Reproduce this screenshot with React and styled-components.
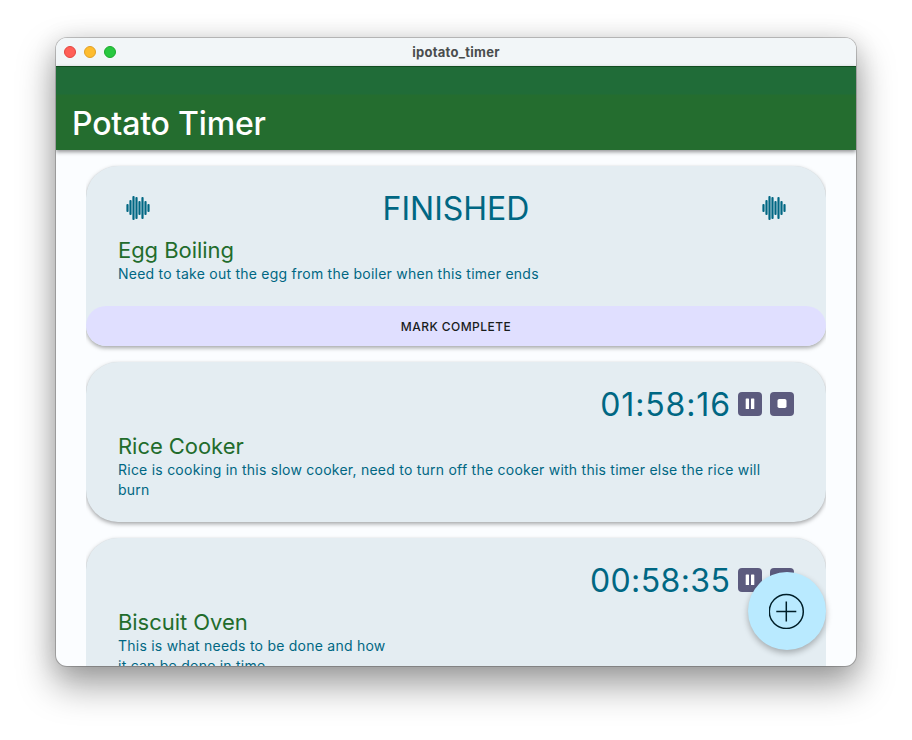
import React from "react";
import styled, { createGlobalStyle } from "styled-components";

const GlobalStyle = createGlobalStyle`
  * { box-sizing: border-box; }
  body { margin: 0; background: #fff; font-family: Inter, "Liberation Sans", sans-serif; overflow: hidden; }
`;

const Desktop = styled.div`
  height: 740px;
  padding: 38px 56px 0;
`;

const Window = styled.main`
  position: relative;
  width: 800px;
  height: 628px;
  border-radius: 11px;
  background: #fbfdff;
  box-shadow: 0 0 0 1px rgba(0, 0, 0, 0.2), 0 18px 36px 2px rgba(0, 0, 0, 0.36), 0 2px 24px rgba(0, 0, 0, 0.12);
`;

const Clip = styled.div`
  height: 100%;
  display: flex;
  flex-direction: column;
  border-radius: 11px;
  overflow: hidden;
`;

const TitleBar = styled.div`
  flex: none;
  height: 28px;
  display: grid;
  grid-template-columns: 1fr auto 1fr;
  align-items: center;
  padding: 0 8px;
  background: #f2f6f8;
`;

const Lights = styled.div`
  display: flex;
  gap: 8px;
`;

const Light = styled.span`
  width: 12px;
  height: 12px;
  border-radius: 50%;
  background: ${(p) => p.$fill};
  border: 1px solid ${(p) => p.$edge};
`;

const WindowTitle = styled.div`
  font-size: 13px;
  line-height: 16px;
  font-weight: 700;
  letter-spacing: 0.28px;
  margin-bottom: 1px;
  color: #4a4d4d;
`;

const Header = styled.header`
  flex: none;
  height: 84px;
  z-index: 1;
  display: flex;
  align-items: flex-end;
  padding: 0 16px 6px;
  border-top: 1px solid #114c20;
  background: linear-gradient(#206c38 0 27px, #246d2f 28px);
  box-shadow: 0 2px 4px rgba(0, 0, 0, 0.42);
`;

const AppTitle = styled.h1`
  margin: 0;
  font-size: 32px;
  line-height: 40px;
  font-weight: 500;
  letter-spacing: -0.18px;
  color: #fff;
`;

const List = styled.section`
  flex: 1;
  min-height: 0;
  display: flex;
  flex-direction: column;
  gap: 16px;
  margin: 0 30px;
  padding-top: 16px;
  overflow: hidden;
`;

const Card = styled.article`
  flex: none;
  height: ${(p) => p.$height}px;
  display: flex;
  flex-direction: column;
  border-radius: ${(p) => (p.$finished ? "32px 32px 20px 20px" : "32px")};
  overflow: hidden;
  background: #e4edf2;
  box-shadow: 0 2px 4px rgba(0, 0, 0, 0.34), 0 0 1px rgba(0, 0, 0, 0.08);
`;

const CardBody = styled.div`
  flex: 1;
  padding: 22px 32px 0;
`;

const TimeRow = styled.div`
  height: 40px;
  display: flex;
  align-items: center;
  justify-content: ${(p) => (p.$spread ? "space-between" : "flex-end")};
  gap: 8px;
  padding: ${(p) => (p.$spread ? "0 8px" : "0")};
`;

const Time = styled.div`
  font-size: 32px;
  line-height: 40px;
  letter-spacing: ${(p) => p.$spacing || "0"};
  margin-right: -${(p) => p.$spacing || "0px"};
  padding-top: 2px;
  color: #006783;
`;

const Name = styled.h2`
  margin: 8px 0 0;
  font-size: 22px;
  line-height: 28px;
  font-weight: 400;
  letter-spacing: -0.05px;
  color: #226c2c;
`;

const Description = styled.p`
  margin: 0;
  max-width: ${(p) => p.$width || "none"};
  font-size: 14px;
  line-height: 20px;
  letter-spacing: 0.24px;
  color: #006783;
`;

const CompleteButton = styled.button`
  flex: none;
  height: 40px;
  border: 0;
  border-radius: 20px;
  padding: 1px 0 0;
  background: #e0dfff;
  color: #191c1d;
  font: 500 12px/16px Inter, "Liberation Sans", sans-serif;
  letter-spacing: 0.45px;
`;

const ControlButton = styled.button`
  width: 24px;
  height: 24px;
  border: 0;
  border-radius: 4px;
  padding: 0;
  background: #5c5b7e;
  display: grid;
  place-items: center;
`;

const Fab = styled.button`
  position: absolute;
  right: 30px;
  bottom: 16px;
  z-index: 2;
  width: 78px;
  height: 78px;
  border: 0;
  border-radius: 50%;
  padding: 0;
  display: grid;
  place-items: center;
  background: #b9eaff;
  box-shadow: 0 3px 6px rgba(0, 0, 0, 0.28);
`;

const Svg = styled.svg`
  display: block;
`;

const bars = [[8, 16], [4, 19], [0, 24], [1, 23], [5, 19], [1, 23], [5, 19], [8, 16]];

const Wave = () => (
  <Svg width="24" height="24" viewBox="0 0 24 24">
    {bars.map(([top, bottom], i) => (
      <rect key={i} x={i * 3 + 0.4} y={top} width="2.2" height={bottom - top} rx="1" fill="#006783" />
    ))}
  </Svg>
);

const Controls = () => (
  <>
    <ControlButton aria-label="Pause">
      <Svg width="24" height="24" fill="#fff">
        <rect x="7.7" y="6.5" width="3.3" height="10.5" rx="0.6" />
        <rect x="13" y="6.5" width="3.3" height="10.5" rx="0.6" />
      </Svg>
    </ControlButton>
    <ControlButton aria-label="Stop">
      <Svg width="24" height="24" fill="#fff">
        <rect x="7.5" y="7" width="9" height="9" rx="1.8" />
      </Svg>
    </ControlButton>
  </>
);

export default function App() {
  return (
    <Desktop>
      <GlobalStyle />
      <Window>
        <Clip>
          <TitleBar>
            <Lights>
              <Light $fill="#ff5f57" $edge="#e2463f" />
              <Light $fill="#febc2e" $edge="#e0a026" />
              <Light $fill="#28c840" $edge="#1caa2c" />
            </Lights>
            <WindowTitle>ipotato_timer</WindowTitle>
          </TitleBar>
          <Header>
            <AppTitle>Potato Timer</AppTitle>
          </Header>
          <List>
            <Card $height={180} $finished>
              <CardBody>
                <TimeRow $spread>
                  <Wave />
                  <Time>FINISHED</Time>
                  <Wave />
                </TimeRow>
                <Name>Egg Boiling</Name>
                <Description>Need to take out the egg from the boiler when this timer ends</Description>
              </CardBody>
              <CompleteButton>MARK COMPLETE</CompleteButton>
            </Card>
            <Card $height={160}>
              <CardBody>
                <TimeRow>
                  <Time $spacing="0.85px">01:58:16</Time>
                  <Controls />
                </TimeRow>
                <Name>Rice Cooker</Name>
                <Description>
                  Rice is cooking in this slow cooker, need to turn off the cooker with this timer else the rice will burn
                </Description>
              </CardBody>
            </Card>
            <Card $height={180}>
              <CardBody>
                <TimeRow>
                  <Time $spacing="0.4px">00:58:35</Time>
                  <Controls />
                </TimeRow>
                <Name>Biscuit Oven</Name>
                <Description $width="280px">This is what needs to be done and how it can be done in time.</Description>
              </CardBody>
            </Card>
          </List>
        </Clip>
        <Fab aria-label="Add timer">
          <Svg width="36" height="36" fill="none" stroke="#001f29" strokeWidth="1.5">
            <circle cx="17.3" cy="18.5" r="17" />
            <path d="M7.3 18.5h20M17.3 8.5v20" />
          </Svg>
        </Fab>
      </Window>
    </Desktop>
  );
}
